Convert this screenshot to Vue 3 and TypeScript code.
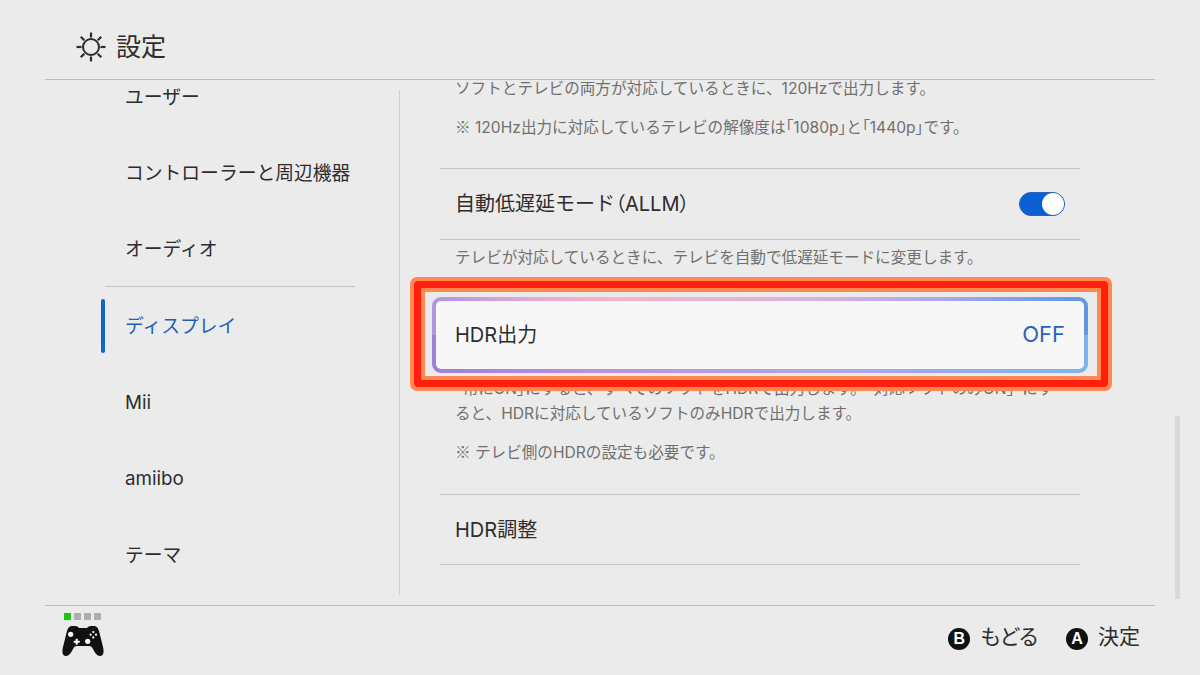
<script setup lang="ts">
const navItems = [
  { label: 'ユーザー' },
  { label: 'コントローラーと周辺機器' },
  { label: 'オーディオ', divider: true },
  { label: 'ディスプレイ', active: true },
  { label: 'Mii' },
  { label: 'amiibo' },
  { label: 'テーマ' },
]
const rays = [0, 45, 90, 135, 180, 225, 270, 315]
</script>

<template>
  <div class="screen">
    <header class="header">
      <svg class="sun" width="30" height="30" viewBox="0 0 30 30">
        <circle cx="15" cy="15" r="8" fill="none" stroke="#2d2d2d" stroke-width="2" />
        <line v-for="r in rays" :key="r" x1="15" y1="0.5" x2="15" y2="5.5" stroke="#2d2d2d"
              stroke-width="2.2" :transform="`rotate(${r} 15 15)`" />
      </svg>
      <h1 class="title">設定</h1>
    </header>

    <main class="body">
      <nav class="sidebar">
        <div v-for="it in navItems" :key="it.label" class="nav-item"
             :class="{ active: it.active, divider: it.divider }">
          {{ it.label }}
        </div>
      </nav>
      <div class="vline"></div>
      <section class="content">
        <p class="desc first">ソフトとテレビの両方が対応しているときに、120Hzで出力します。</p>
        <p class="desc note"><span class="mark">※</span> 120Hz出力に対応しているテレビの解像度は<span class="tight">「1080p」</span>と<span class="tight">「1440p」</span>です。</p>

        <div class="row ruled-top">
          <span>自動低遅延モード<span class="tight">（ALLM）</span></span>
          <span class="toggle"><span class="knob"></span></span>
        </div>
        <p class="desc after-row">テレビが対応しているときに、テレビを自動で低遅延モードに変更します。</p>

        <div class="row selected">
          <span>HDR出力</span>
          <span class="value">OFF</span>
          <div class="callout"></div>
        </div>
        <p class="desc under-selected"><span class="tight">「常にON」</span>にすると、すべてのソフトをHDRで出力します。「対応ソフトのみON」にすると、HDRに対応しているソフトのみHDRで出力します。</p>
        <p class="desc note"><span class="mark">※</span> テレビ側のHDRの設定も必要です。</p>

        <div class="row ruled-top last">
          <span>HDR調整</span>
        </div>
      </section>
      <div class="scroll-thumb"></div>
    </main>

    <footer class="footer">
      <div class="player">
        <div class="leds">
          <i class="led on"></i><i class="led"></i><i class="led"></i><i class="led"></i>
        </div>
        <svg width="42" height="31" viewBox="0 0 42 31">
          <path fill="#111" d="M11 0C13 0 16 0 17 2H25C26 0 29 0 31 0C35 0 36 2 37 5L41 21C42 25 42 30 38 30C35 30 33 27 31 23C30 21 29 20 27 20H15C13 20 12 21 11 23C9 27 7 30 4 30C0 30 0 25 1 21L5 5C6 2 7 0 11 0Z" />
          <circle cx="8.7" cy="8.3" r="2.6" fill="#fff" />
          <circle cx="25.7" cy="15.3" r="2.6" fill="#fff" />
          <path fill="#fff" d="M13.7 12.7h2v2h2v2h-2v2h-2v-2h-2v-2h2z" />
          <circle cx="31.3" cy="6" r="1.1" fill="#fff" />
          <circle cx="31.3" cy="11.4" r="1.1" fill="#fff" />
          <circle cx="28.6" cy="8.7" r="1.1" fill="#fff" />
          <circle cx="34" cy="8.7" r="1.1" fill="#fff" />
        </svg>
      </div>
      <div class="hints">
        <span class="hint"><b class="btn">B</b>もどる</span>
        <span class="hint"><b class="btn">A</b>決定</span>
      </div>
    </footer>
  </div>
</template>

<style scoped>
.screen {
  width: 1200px; height: 675px; padding: 0 45px; box-sizing: border-box;
  background: #ebebeb; color: #2d2d2d; overflow: hidden; position: relative;
  font-family: Inter, "Noto Sans CJK JP", sans-serif;
}
.tight { font-feature-settings: "palt"; }
.mark { font-family: "Noto Sans CJK JP", sans-serif; }
.header {
  height: 80px; box-sizing: border-box; border-bottom: 1px solid #bdbdbd;
  display: flex; align-items: center; gap: 10px; padding-left: 31px; padding-top: 14px;
}
.sun { flex: none; }
.title { margin: 0; font-size: 25px; font-weight: 400; line-height: 30px; font-feature-settings: "palt"; }

.body { height: 525px; display: flex; overflow: hidden; }
.sidebar { width: 354px; flex: none; padding-left: 60px; box-sizing: border-box; margin-top: -22px; }
.nav-item {
  position: relative; width: 250px; height: 76.33px; box-sizing: border-box; padding: 4px 0 0 20px;
  display: flex; align-items: center; font-size: 18.8px; line-height: 1;
}
.nav-item.divider { border-bottom: 1px solid #c4c4c4; }
.nav-item.active { color: #1f5fb5; }
.nav-item.active::before {
  content: ""; position: absolute; left: -4px; top: 12px; width: 4px; height: 54px;
  border-radius: 2px; background: #1265c4;
}
.vline { width: 1px; flex: none; margin: 10px 0; background: #cfcfcf; }

.content { width: 640px; margin-left: 40px; flex: none; }
.desc {
  margin: 0; padding: 0 15px; font-size: 15.6px; line-height: 25px; color: #707070;
}
.desc.first { margin-top: -4px; }
.desc.note { margin-top: 13px; }
.desc.after-row { margin-top: 5px; }
.desc.under-selected { margin-top: 3px; padding-right: 20px; }

.row {
  height: 71px; box-sizing: border-box; padding: 0 15px 3px; font-size: 20px;
  display: flex; align-items: center; justify-content: space-between;
  border-bottom: 1px solid #c4c4c4;
}
.row.ruled-top { height: 72px; border-top: 1px solid #c4c4c4; margin-top: 28px; }
.row.last { height: 71px; margin-top: 29px; }
.toggle {
  width: 46px; height: 24px; margin-top: 3px; box-sizing: border-box; border-radius: 12px;
  background: #0a5fd2; border: 1px solid #2a62b8;
  display: flex; align-items: center; justify-content: flex-end;
}
.knob { width: 22px; height: 22px; border-radius: 50%; background: #fff; }

.row.selected {
  position: relative; z-index: 1; height: 76px; margin: 27px -8px 0; padding: 0 19px 3px;
  border: 4px solid transparent; border-radius: 9px;
  background:
    linear-gradient(#f7f7f7, #f7f7f7) padding-box,
    linear-gradient(90deg, #b094e0 0%, #e6a8d6 15%, #f8b4c8 28%, #d8b0e0 60%, #a8a8ec 78%, #5f96e6 100%) top / 100% 50% no-repeat border-box,
    linear-gradient(90deg, #9c80dc 0%, #c090dc 25%, #b0a4e8 60%, #7cb4f0 100%) bottom / 100% 50% no-repeat border-box;
}
.value { color: #2a62b8; font-size: 22px; }
.callout {
  position: absolute; left: -22px; right: -24px; top: -20px; bottom: -18px;
  border: 7px solid #ff1e10; border-radius: 3px; pointer-events: none;
  outline: 4px solid #ff8850; box-shadow: inset 0 0 0 4px #ff8850;
}

.scroll-thumb {
  position: absolute; left: 1175px; top: 416px; width: 5px; height: 183px; background: #d8d8d8;
}

.footer {
  height: 70px; box-sizing: border-box; border-top: 1px solid #bdbdbd;
  display: flex; align-items: flex-start; justify-content: space-between;
  padding: 7px 15px 0 17px;
}
.player { display: flex; flex-direction: column; gap: 6px; }
.leds { display: flex; gap: 3px; padding-left: 2px; }
.led { width: 7px; height: 7px; background: #aeaeae; }
.led.on { background: #14c814; }
.hints {
  display: flex; gap: 28px; padding-top: 11px; font-size: 21px; line-height: 24px;
  font-feature-settings: "palt";
}
.hint { display: flex; align-items: center; gap: 10px; }
.btn {
  width: 22px; height: 22px; margin-top: 4px; border-radius: 50%; background: #111; color: #fff;
  font-size: 16px; font-weight: 700; line-height: 22px; text-align: center;
  font-family: "Liberation Sans", sans-serif;
}
</style>

<style>
html, body { margin: 0; background: #ebebeb; }
</style>
